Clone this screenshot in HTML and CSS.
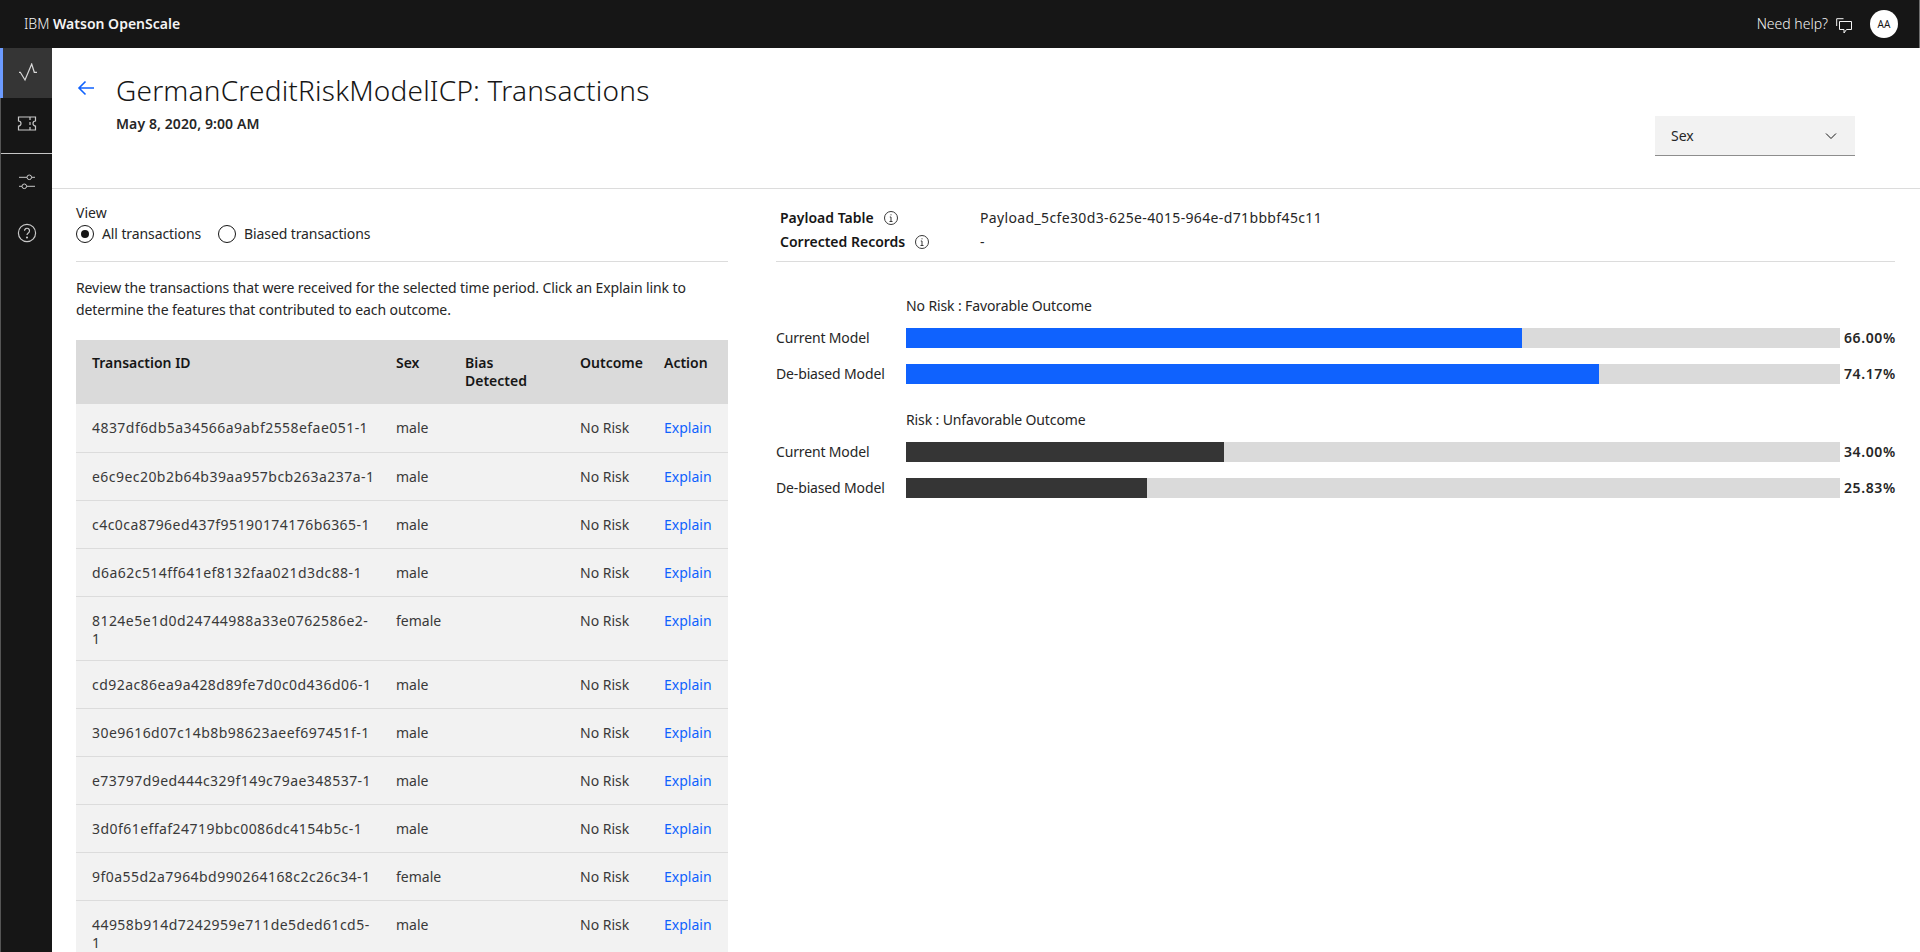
FILE: index.html
```html
<!DOCTYPE html>
<html lang="en">

<head>
    <meta charset="UTF-8">
    <meta name="viewport" content="width=device-width, initial-scale=1.0">
    <title>IBM Watson OpenScale</title>
    <link rel="stylesheet" href="styles.css">
</head>

<body>
    <header class="topbar">
        <div class="brand">IBM <b>Watson OpenScale</b></div>
        <div class="topbar-right">
            <span class="help-text">Need help?</span>
            <svg class="chat-icon" width="20" height="20" viewBox="0 0 20 20" fill="none" stroke="#f4f4f4" stroke-width="1">
                <path d="M5.500 7.500h12v8h-5l-2.500 3.500v-3.500h-4.500z" />
                <path d="M2.700 12V4.700h6.800" />
            </svg>
            <div class="avatar">AA</div>
        </div>
    </header>

    <div class="app">
        <nav class="sidenav">
            <div class="nav-item active">
                <svg width="20" height="20" viewBox="0 0 20 20" fill="none" stroke="#d8d8d8" stroke-width="1.200">
                    <path d="M1 9.300h1.300L7 17l6.700-16 2.600 8.300H19" />
                </svg>
            </div>
            <div class="nav-item">
                <svg width="20" height="20" viewBox="0 0 20 20" fill="none" stroke="#c8c8c8" stroke-width="1.200">
                    <path d="M1.500 4h17v4a2.500 2.500 0 0 0 0 5v4h-17v-4a2.500 2.500 0 0 0 0-5z" />
                    <path d="M13 4v3M13 9v3M13 14v3" />
                </svg>
            </div>
            <div class="nav-divider"></div>
            <div class="nav-item">
                <svg width="20" height="20" viewBox="0 0 20 20" fill="none" stroke="#c8c8c8" stroke-width="1">
                    <path d="M2 6.300h8M14.600 6.300H18M2 15.300h3M9.600 15.300H18" />
                    <circle cx="12.300" cy="6.300" r="2.300" />
                    <circle cx="7.300" cy="15.300" r="2.300" />
                </svg>
            </div>
            <div class="nav-item help-item">
                <svg width="20" height="20" viewBox="0 0 20 20" fill="none" stroke="#c8c8c8" stroke-width="1.200">
                    <circle cx="10" cy="10" r="8.600" />
                    <path d="M7.500 7.800a2.500 2.500 0 1 1 3.800 2.100c-.9.600-1.300 1-1.300 2.100" />
                    <circle cx="10" cy="14.500" r=".5" fill="#c8c8c8" />
                </svg>
            </div>
        </nav>

        <main class="main">
            <section class="page-head">
                <svg class="back-arrow" width="20" height="20" viewBox="0 0 20 20" fill="none" stroke="#0f62fe" stroke-width="1.600">
                    <path d="M18 10H3M9.500 3.500L3 10l6.500 6.500" />
                </svg>
                <div class="head-text">
                    <h1>GermanCreditRiskModelICP: Transactions</h1>
                    <div class="head-date">May 8, 2020, 9:00 AM</div>
                </div>
                <div class="dropdown">
                    <span>Sex</span>
                    <svg width="16" height="16" viewBox="0 0 16 16" fill="none" stroke="#161616" stroke-width="1">
                        <path d="M3 5.500l5 5 5-5" />
                    </svg>
                </div>
            </section>

            <div class="columns">
                <section class="left-col">
                    <div class="view-label">View</div>
                    <div class="radio-row">
                        <label class="radio"><span class="radio-dot checked"></span>All transactions</label>
                        <label class="radio"><span class="radio-dot"></span>Biased transactions</label>
                    </div>
                    <p class="intro">Review the transactions that were received for the selected time period. Click an Explain link to determine the features that contributed to each outcome.</p>

                    <table class="tx-table">
                        <colgroup>
                            <col class="col-id">
                            <col class="col-sex">
                            <col class="col-bias">
                            <col class="col-outcome">
                            <col class="col-action">
                        </colgroup>
                        <thead>
                            <tr>
                                <th>Transaction ID</th>
                                <th>Sex</th>
                                <th>Bias Detected</th>
                                <th>Outcome</th>
                                <th>Action</th>
                            </tr>
                        </thead>
                        <tbody>
                            <tr><td class="tx-id">4837df6db5a34566a9abf2558efae051-1</td><td>male</td><td></td><td>No Risk</td><td><a href="#">Explain</a></td></tr>
                            <tr><td class="tx-id">e6c9ec20b2b64b39aa957bcb263a237a-1</td><td>male</td><td></td><td>No Risk</td><td><a href="#">Explain</a></td></tr>
                            <tr><td class="tx-id">c4c0ca8796ed437f95190174176b6365-1</td><td>male</td><td></td><td>No Risk</td><td><a href="#">Explain</a></td></tr>
                            <tr><td class="tx-id">d6a62c514ff641ef8132faa021d3dc88-1</td><td>male</td><td></td><td>No Risk</td><td><a href="#">Explain</a></td></tr>
                            <tr><td class="tx-id">8124e5e1d0d24744988a33e0762586e2-<br>1</td><td>female</td><td></td><td>No Risk</td><td><a href="#">Explain</a></td></tr>
                            <tr><td class="tx-id">cd92ac86ea9a428d89fe7d0c0d436d06-1</td><td>male</td><td></td><td>No Risk</td><td><a href="#">Explain</a></td></tr>
                            <tr><td class="tx-id">30e9616d07c14b8b98623aeef697451f-1</td><td>male</td><td></td><td>No Risk</td><td><a href="#">Explain</a></td></tr>
                            <tr><td class="tx-id">e73797d9ed444c329f149c79ae348537-1</td><td>male</td><td></td><td>No Risk</td><td><a href="#">Explain</a></td></tr>
                            <tr><td class="tx-id">3d0f61effaf24719bbc0086dc4154b5c-1</td><td>male</td><td></td><td>No Risk</td><td><a href="#">Explain</a></td></tr>
                            <tr><td class="tx-id">9f0a55d2a7964bd990264168c2c26c34-1</td><td>female</td><td></td><td>No Risk</td><td><a href="#">Explain</a></td></tr>
                            <tr><td class="tx-id">44958b914d7242959e711de5ded61cd5-<br>1</td><td>male</td><td></td><td>No Risk</td><td><a href="#">Explain</a></td></tr>
                        </tbody>
                    </table>
                </section>

                <section class="right-col">
                    <div class="meta">
                        <div class="meta-row">
                            <div class="meta-label">Payload Table
                                <svg class="info-icon" width="16" height="16" viewBox="0 0 16 16" fill="none" stroke="#393939" stroke-width="1">
                                    <circle cx="8" cy="8" r="6.500" />
                                    <path d="M6.500 11.500h3M8 11.500V7H6.800M8 4.300v1" />
                                </svg>
                            </div>
                            <div class="meta-value">Payload_5cfe30d3-625e-4015-964e-d71bbbf45c11</div>
                        </div>
                        <div class="meta-row">
                            <div class="meta-label">Corrected Records
                                <svg class="info-icon" width="16" height="16" viewBox="0 0 16 16" fill="none" stroke="#393939" stroke-width="1">
                                    <circle cx="8" cy="8" r="6.500" />
                                    <path d="M6.500 11.500h3M8 11.500V7H6.800M8 4.300v1" />
                                </svg>
                            </div>
                            <div class="meta-value">-</div>
                        </div>
                    </div>

                    <div class="chart-group first">
                        <div class="chart-title">No Risk : Favorable Outcome</div>
                        <div class="bar-row">
                            <div class="bar-label">Current Model</div>
                            <div class="bar-track"><div class="bar-fill" style="width: 66%"></div></div>
                            <div class="bar-value">66.00%</div>
                        </div>
                        <div class="bar-row">
                            <div class="bar-label">De-biased Model</div>
                            <div class="bar-track"><div class="bar-fill" style="width: 74.17%"></div></div>
                            <div class="bar-value">74.17%</div>
                        </div>
                    </div>

                    <div class="chart-group">
                        <div class="chart-title">Risk : Unfavorable Outcome</div>
                        <div class="bar-row">
                            <div class="bar-label">Current Model</div>
                            <div class="bar-track"><div class="bar-fill dark" style="width: 34%"></div></div>
                            <div class="bar-value">34.00%</div>
                        </div>
                        <div class="bar-row">
                            <div class="bar-label">De-biased Model</div>
                            <div class="bar-track"><div class="bar-fill dark" style="width: 25.83%"></div></div>
                            <div class="bar-value">25.83%</div>
                        </div>
                    </div>
                </section>
            </div>
        </main>
    </div>
</body>

</html>
```

FILE: styles.css
```css
* {
    margin: 0;
    padding: 0;
    box-sizing: border-box;
}

html,
body {
    height: 952px;
    overflow: hidden;
}

body {
    font-family: "Noto Sans", "Liberation Sans", sans-serif;
    font-size: 14px;
    line-height: 18px;
    color: #262626;
    background: #fff;
}

/* top bar */
.topbar {
    height: 48px;
    background: #161616;
    border-right: 1px solid #6f6f6f;
    color: #f4f4f4;
    display: flex;
    align-items: center;
    justify-content: space-between;
    padding: 0 21px 0 24px;
}

.brand {
    font-size: 14px;
    font-weight: 300;
}

.brand b {
    font-weight: 600;
}

.topbar-right {
    display: flex;
    align-items: center;
}

.help-text {
    font-weight: 300;
}

.chat-icon {
    margin-left: 6px;
}

.avatar {
    width: 28px;
    height: 28px;
    margin-left: 16px;
    border-radius: 50%;
    background: #fff;
    color: #161616;
    font-size: 10px;
    text-align: center;
    line-height: 28px;
}

.app {
    display: flex;
    height: 904px;
}

/* left nav */
.sidenav {
    width: 52px;
    flex: none;
    background: #161616;
    border-left: 1px solid #555;
}

.nav-item {
    height: 50px;
    display: flex;
    align-items: center;
    justify-content: center;
}

.nav-item.active {
    margin-left: -1px;
    background: #353535;
    border-left: 3px solid #6c9bff;
}

.nav-item.help-item {
    margin-top: 2px;
}

.nav-divider {
    height: 1px;
    margin: 5px 0 2px;
    background: #c6c6c6;
}

.main {
    flex: 1;
    min-width: 0;
}

/* page title */
.page-head {
    height: 141px;
    border-bottom: 1px solid #dcdcdc;
    display: flex;
    padding: 28px 65px 0 24px;
}

.back-arrow {
    margin: 2px 20px 0 0;
    flex: none;
}

.head-text {
    flex: 1;
}

h1 {
    font-size: 28px;
    line-height: 28px;
    font-weight: 300;
    letter-spacing: .2px;
    color: #161616;
}

.head-date {
    margin-top: 11px;
    font-size: 14px;
    font-weight: 600;
    letter-spacing: .1px;
}

.dropdown {
    width: 200px;
    height: 40px;
    margin-top: 40px;
    padding: 0 16px;
    background: #f2f2f2;
    border-bottom: 1px solid #8d8d8d;
    display: flex;
    align-items: center;
    justify-content: space-between;
}

/* columns */
.columns {
    display: flex;
    padding: 0 25px 0 24px;
    gap: 48px;
}

.left-col {
    width: 652px;
    flex: none;
    padding-top: 15px;
}

.right-col {
    flex: 1;
    min-width: 0;
    padding-top: 17px;
}

.radio-row {
    display: flex;
    gap: 17px;
    height: 20px;
    margin-top: 2px;
    letter-spacing: -.1px;
}

.radio {
    display: flex;
    align-items: center;
}

.radio-dot {
    width: 18px;
    height: 18px;
    margin-right: 8px;
    border: 1px solid #161616;
    border-radius: 50%;
    display: flex;
    align-items: center;
    justify-content: center;
}

.radio-dot.checked::after {
    content: "";
    width: 8px;
    height: 8px;
    border-radius: 50%;
    background: #161616;
}

.intro {
    margin-top: 17px;
    padding-top: 15px;
    border-top: 1px solid #dcdcdc;
    line-height: 22px;
    letter-spacing: -.1px;
}

/* table */
.tx-table {
    width: 652px;
    margin-top: 19px;
    table-layout: fixed;
    border-collapse: collapse;
}

.col-id {
    width: 304px;
}

.col-sex {
    width: 69px;
}

.col-bias {
    width: 115px;
}

.col-outcome {
    width: 84px;
}

.col-action {
    width: 80px;
}

.tx-table th {
    height: 64px;
    padding: 14px 16px 0;
    background: #dadada;
    text-align: left;
    vertical-align: top;
    font-weight: 600;
    color: #161616;
}

.tx-table td {
    height: 48px;
    padding: 15px 16px 12px;
    background: #f2f2f2;
    border-bottom: 1px solid #dcdcdc;
    vertical-align: top;
    color: #393939;
}

.tx-table td.tx-id {
    letter-spacing: .45px;
    white-space: nowrap;
}

.tx-table a {
    color: #0f62fe;
    text-decoration: none;
}

/* payload info */
.meta {
    padding: 0 0 7px 4px;
    border-bottom: 1px solid #dcdcdc;
}

.meta-row {
    display: flex;
    height: 24px;
    align-items: center;
}

.meta-label {
    width: 200px;
    flex: none;
    display: flex;
    align-items: center;
    font-weight: 600;
    color: #161616;
}

.meta-value {
    letter-spacing: .36px;
}

.info-icon {
    margin-left: 9px;
}

/* charts */
.chart-group {
    margin-top: 27px;
}

.chart-group.first {
    margin-top: 35px;
}

.chart-title {
    margin: 0 0 13px 130px;
    letter-spacing: -.12px;
}

.bar-row {
    display: flex;
    align-items: center;
    height: 20px;
    margin-bottom: 16px;
}

.chart-group .bar-row:last-child {
    margin-bottom: 0;
}

.bar-label {
    width: 130px;
    flex: none;
    letter-spacing: -.15px;
}

.bar-track {
    width: 934px;
    height: 20px;
    flex: none;
    background: #dadada;
}

.bar-fill {
    height: 100%;
    background: #0f62fe;
}

.bar-fill.dark {
    background: #353535;
}

.bar-value {
    margin-left: 4px;
    font-weight: 600;
    letter-spacing: .6px;
    white-space: nowrap;
}
```
